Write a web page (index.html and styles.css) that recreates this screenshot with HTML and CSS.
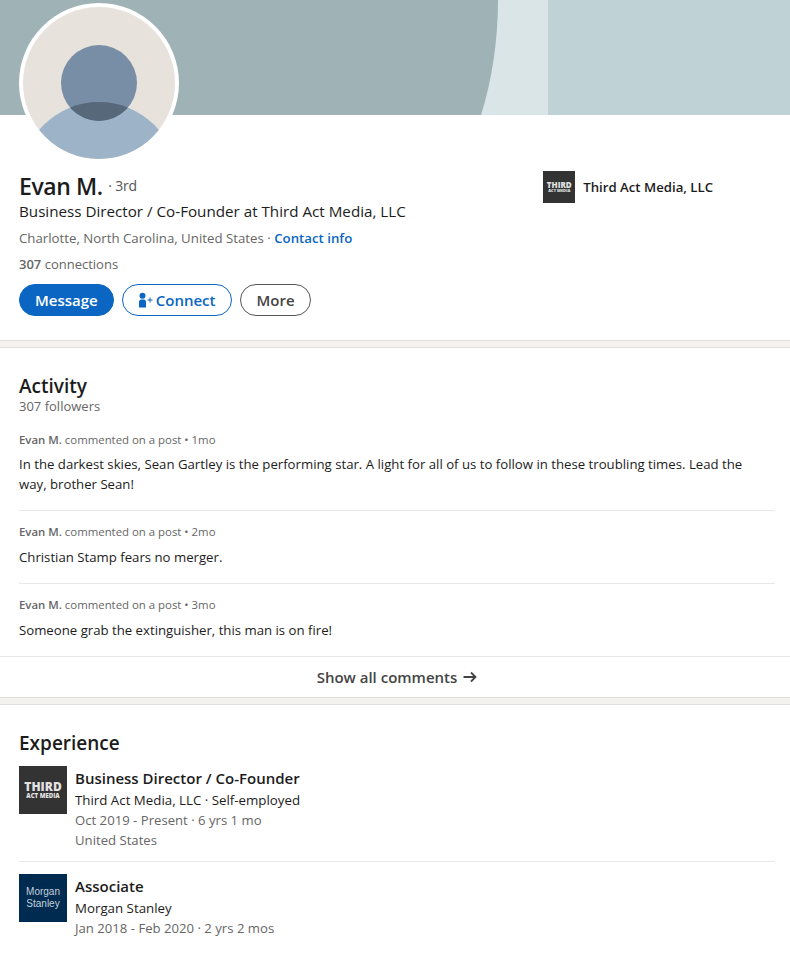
FILE: index.html
```html
<!DOCTYPE html>
<html lang="en">

<head>
    <meta charset="UTF-8">
    <meta name="viewport" content="width=device-width, initial-scale=1.0">
    <title>Evan M.</title>
    <link rel="stylesheet" href="styles.css">
</head>

<body>
    <section class="top-card">
        <svg class="banner" viewBox="0 0 790 115" width="790" height="115" aria-hidden="true">
            <rect width="790" height="115" fill="#bfd2d6"></rect>
            <rect width="548" height="115" fill="#d9e5e7"></rect>
            <path d="M0 0H498C498 40 492 80 481 115H0Z" fill="#9fb2b6"></path>
        </svg>
        <svg class="avatar" viewBox="0 0 160 160" width="160" height="160" aria-hidden="true">
            <defs>
                <clipPath id="avatarClip">
                    <circle cx="80" cy="80" r="76"></circle>
                </clipPath>
                <clipPath id="bodyClip">
                    <circle cx="80" cy="177" r="78"></circle>
                </clipPath>
            </defs>
            <circle cx="80" cy="80" r="80" fill="#fff"></circle>
            <g clip-path="url(#avatarClip)">
                <rect width="160" height="160" fill="#e7e2dc"></rect>
                <circle cx="80" cy="177" r="78" fill="#9db3c8"></circle>
                <circle cx="80" cy="80" r="38" fill="#778ea6"></circle>
                <circle cx="80" cy="80" r="38" fill="#56687a" clip-path="url(#bodyClip)"></circle>
            </g>
        </svg>
        <div class="top-info">
            <div class="top-text">
                <h1 class="name">Evan M. <span class="degree">· 3rd</span></h1>
                <p class="headline">Business Director / Co-Founder at Third Act Media, LLC</p>
                <p class="location">Charlotte, North Carolina, United States · <a href="#" class="contact">Contact info</a></p>
                <p class="connections"><b>307</b> connections</p>
            </div>
            <div class="top-company">
                <div class="logo logo-third logo-small"><span class="third-big">THIRD</span><span class="third-small">ACT MEDIA</span></div>
                <span>Third Act Media, LLC</span>
            </div>
        </div>
        <div class="actions">
            <button class="btn btn-primary">Message</button>
            <button class="btn btn-outline">
                <svg viewBox="0 0 16 16" width="16" height="16" aria-hidden="true">
                    <circle cx="4.500" cy="3.800" r="3" fill="currentColor"></circle>
                    <path d="M1 10c0-1.500 1-2.500 2-2.500h3c1 0 2 1 2 2.500v5.500H1z" fill="currentColor"></path>
                    <path d="M9.500 8h5M12 5.500v5" stroke="currentColor" stroke-width="1" fill="none"></path>
                </svg>
                Connect
            </button>
            <button class="btn btn-grey">More</button>
        </div>
    </section>

    <section class="card activity">
        <h2>Activity</h2>
        <p class="followers">307 followers</p>
        <ul class="posts">
            <li>
                <p class="post-meta"><b>Evan M.</b> commented on a post • 1mo</p>
                <p class="post-text">In the darkest skies, Sean Gartley is the performing star. A light for all of us to follow in these troubling times. Lead the way, brother Sean!</p>
            </li>
            <li>
                <p class="post-meta"><b>Evan M.</b> commented on a post • 2mo</p>
                <p class="post-text">Christian Stamp fears no merger.</p>
            </li>
            <li>
                <p class="post-meta"><b>Evan M.</b> commented on a post • 3mo</p>
                <p class="post-text">Someone grab the extinguisher, this man is on fire!</p>
            </li>
        </ul>
        <a href="#" class="show-all">Show all comments
            <svg viewBox="0 0 16 16" width="16" height="16" aria-hidden="true">
                <path d="M1.500 8h12M9 3.500 13.500 8 9 12.500" stroke="currentColor" stroke-width="1.800" fill="none"></path>
            </svg>
        </a>
    </section>

    <section class="card experience">
        <h2>Experience</h2>
        <div class="job">
            <div class="logo logo-third"><span class="third-big">THIRD</span><span class="third-small">ACT MEDIA</span></div>
            <div class="job-text">
                <h3>Business Director / Co-Founder</h3>
                <p>Third Act Media, LLC · Self-employed</p>
                <p class="muted">Oct 2019 - Present · 6 yrs 1 mo</p>
                <p class="muted">United States</p>
            </div>
        </div>
        <div class="job">
            <div class="logo logo-morgan">Morgan<br>Stanley</div>
            <div class="job-text">
                <h3>Associate</h3>
                <p>Morgan Stanley</p>
                <p class="muted">Jan 2018 - Feb 2020 · 2 yrs 2 mos</p>
            </div>
        </div>
    </section>
</body>

</html>
```

FILE: styles.css
```css
* {
    box-sizing: border-box;
}

body {
    margin: 0;
    background-color: #f3f2ee;
    color: #1c1c1c;
    font-family: "Open Sans", "Noto Sans", sans-serif;
    font-size: 14px;
    overflow: hidden;
}

p,
h1,
h2,
h3,
ul {
    margin: 0;
    padding: 0;
}

a {
    text-decoration: none;
}

.top-card {
    height: 341px;
    background-color: #fff;
    border-bottom: 1px solid #e0dfdb;
}

.banner {
    display: block;
}

.avatar {
    display: block;
    position: relative;
    margin: -112px 0 0 19px;
}

.top-info {
    display: flex;
    justify-content: space-between;
    padding: 10px 77px 0 19px;
}

.name {
    font-size: 23px;
    line-height: 26px;
    font-weight: 600;
    letter-spacing: -0.4px;
}

.degree {
    position: relative;
    top: -4px;
    font-size: 14px;
    font-weight: 400;
    color: #555;
    letter-spacing: -0.2px;
}

.headline {
    font-size: 15.200px;
    line-height: 20px;
    margin-top: -2px;
}

.location {
    font-size: 13.250px;
    line-height: 20px;
    margin-top: 7px;
    color: #666;
}

.contact {
    color: #0a66c2;
    font-weight: 600;
}

.connections {
    font-size: 13px;
    line-height: 20px;
    margin-top: 6px;
    color: #666;
}

.connections b {
    font-weight: 600;
}

.top-company {
    display: flex;
    align-items: center;
    gap: 8px;
    height: 32px;
    margin-top: -2px;
    font-size: 13.200px;
    font-weight: 600;
}

.logo {
    flex: none;
    width: 48px;
    height: 48px;
    display: flex;
    flex-direction: column;
    align-items: center;
    justify-content: center;
}

.logo-third {
    background-color: #333;
    color: #e2e2e2;
    font-weight: 800;
    line-height: 1;
}

.third-big {
    font-size: 12px;
}

.third-small {
    font-size: 6px;
}

.logo-small {
    width: 32px;
    height: 32px;
}

.logo-small .third-big {
    font-size: 8px;
}

.logo-small .third-small {
    font-size: 4px;
}

.logo-morgan {
    background-color: #002b51;
    color: #c4d0dc;
    font-family: "Liberation Sans", sans-serif;
    font-size: 10px;
    line-height: 12px;
    text-align: center;
}

.actions {
    display: flex;
    gap: 8px;
    margin: 10px 0 0 19px;
}

.btn {
    height: 32px;
    padding: 0 15px;
    border-radius: 16px;
    font-family: inherit;
    font-size: 15px;
    font-weight: 600;
    background: #fff;
    display: flex;
    align-items: center;
    gap: 2px;
}

.btn-primary {
    background-color: #0a66c2;
    border: 1px solid #0a66c2;
    color: #fff;
}

.btn-outline {
    padding-right: 16px;
    border: 1px solid #0a66c2;
    color: #0a66c2;
}

.btn-grey {
    border: 1px solid #555;
    color: #444;
}

.card {
    background-color: #fff;
    border-top: 1px solid #e0dfdb;
}

.activity {
    margin-top: 6px;
    height: 351px;
    padding-top: 26px;
    border-bottom: 1px solid #e0dfdb;
}

h2 {
    font-size: 19px;
    line-height: 24px;
    font-weight: 600;
    margin-left: 19px;
}

.followers {
    font-size: 13px;
    line-height: 16px;
    margin-left: 19px;
    color: #666;
}

.posts {
    list-style: none;
    margin: 12px 15px 0 19px;
}

.posts li {
    padding: 13px 0 16px;
    border-top: 1px solid #e8e8e8;
}

.posts li:first-child {
    border-top: none;
    padding-top: 6px;
}

.post-meta {
    font-size: 11.400px;
    line-height: 16px;
    color: #666;
    margin-bottom: 7px;
}

.posts li:first-child .post-meta {
    margin-bottom: 6px;
}

.post-meta b {
    font-weight: 600;
}

.post-text {
    max-width: 735px;
    font-size: 13.200px;
    line-height: 20px;
}

.show-all {
    display: flex;
    align-items: center;
    justify-content: center;
    gap: 5px;
    height: 40px;
    padding-left: 5px;
    border-top: 1px solid #e8e8e8;
    color: #444;
    font-size: 15px;
    font-weight: 600;
}

.experience {
    min-height: 260px;
    margin-top: 6px;
    padding-top: 26px;
}

.experience h2 {
    margin-bottom: -1px;
}

.job {
    display: flex;
    gap: 8px;
    margin: 0 15px 0 19px;
    padding: 12px 0 11px;
}

.job + .job {
    border-top: 1px solid #e8e8e8;
}

.job-text {
    line-height: 20px;
    font-size: 13.300px;
}

.job-text h3 {
    font-size: 15px;
    line-height: 20px;
    font-weight: 600;
    margin: 2px 0;
}

.muted {
    color: #666;
    font-size: 13.150px;
}
```
